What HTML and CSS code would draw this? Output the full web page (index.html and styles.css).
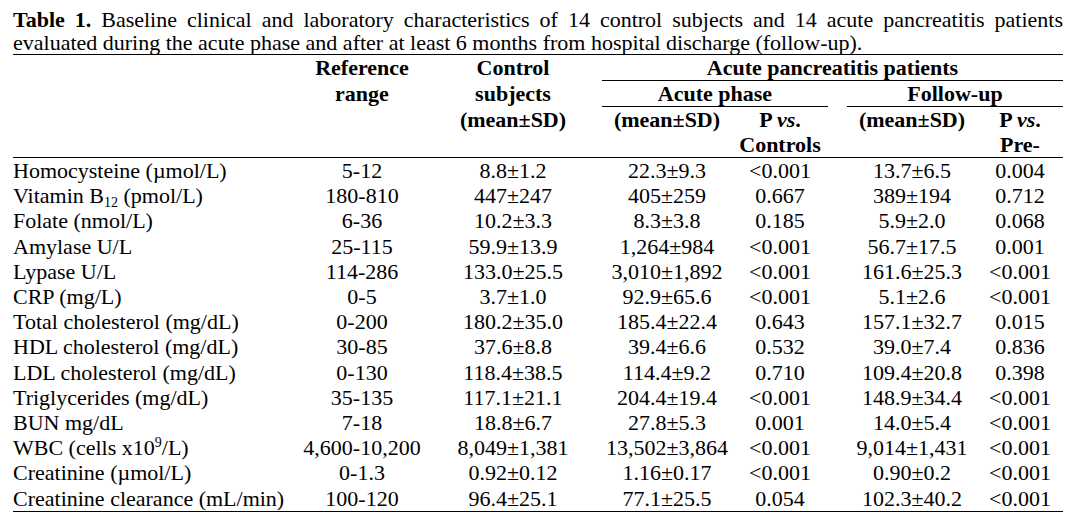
FILE: index.html
```html
<!DOCTYPE html>
<html lang="en">
<head>
<meta charset="utf-8">
<title>Table 1</title>
<link rel="stylesheet" href="styles.css">
</head>
<body>
<div class="page">
  <p class="caption"><b>Table 1.</b> Baseline clinical and laboratory characteristics of 14 control subjects and 14 acute pancreatitis patients evaluated during the acute phase and after at least 6 months from hospital discharge (follow-up).</p>
  <table class="data">
    <colgroup>
      <col class="c-name">
      <col class="c-ref">
      <col class="c-ctrl">
      <col class="c-am">
      <col class="c-ap">
      <col class="c-gap">
      <col class="c-fm">
      <col class="c-fp">
    </colgroup>
    <thead>
      <tr class="h1">
        <th></th>
        <th>Reference</th>
        <th>Control</th>
        <th colspan="6" class="rule">Acute pancreatitis patients</th>
      </tr>
      <tr class="h2">
        <th></th>
        <th>range</th>
        <th>subjects</th>
        <th colspan="2" class="rule">Acute phase</th>
        <th></th>
        <th colspan="2" class="rule">Follow-up</th>
      </tr>
      <tr class="h3">
        <th></th>
        <th></th>
        <th>(mean±SD)</th>
        <th>(mean±SD)</th>
        <th>P <i>vs</i>.</th>
        <th></th>
        <th>(mean±SD)</th>
        <th>P <i>vs</i>.</th>
      </tr>
      <tr class="h4">
        <th></th>
        <th></th>
        <th></th>
        <th></th>
        <th>Controls</th>
        <th></th>
        <th></th>
        <th>Pre-</th>
      </tr>
    </thead>
    <tbody>
      <tr><td>Homocysteine (µmol/L)</td><td>5-12</td><td>8.8±1.2</td><td>22.3±9.3</td><td>&lt;0.001</td><td></td><td>13.7±6.5</td><td>0.004</td></tr>
      <tr><td>Vitamin B<sub>12</sub> (pmol/L)</td><td>180-810</td><td>447±247</td><td>405±259</td><td>0.667</td><td></td><td>389±194</td><td>0.712</td></tr>
      <tr><td>Folate (nmol/L)</td><td>6-36</td><td>10.2±3.3</td><td>8.3±3.8</td><td>0.185</td><td></td><td>5.9±2.0</td><td>0.068</td></tr>
      <tr><td>Amylase U/L</td><td>25-115</td><td>59.9±13.9</td><td>1,264±984</td><td>&lt;0.001</td><td></td><td>56.7±17.5</td><td>0.001</td></tr>
      <tr><td>Lypase U/L</td><td>114-286</td><td>133.0±25.5</td><td>3,010±1,892</td><td>&lt;0.001</td><td></td><td>161.6±25.3</td><td>&lt;0.001</td></tr>
      <tr><td>CRP (mg/L)</td><td>0-5</td><td>3.7±1.0</td><td>92.9±65.6</td><td>&lt;0.001</td><td></td><td>5.1±2.6</td><td>&lt;0.001</td></tr>
      <tr><td>Total cholesterol (mg/dL)</td><td>0-200</td><td>180.2±35.0</td><td>185.4±22.4</td><td>0.643</td><td></td><td>157.1±32.7</td><td>0.015</td></tr>
      <tr><td>HDL cholesterol (mg/dL)</td><td>30-85</td><td>37.6±8.8</td><td>39.4±6.6</td><td>0.532</td><td></td><td>39.0±7.4</td><td>0.836</td></tr>
      <tr><td>LDL cholesterol (mg/dL)</td><td>0-130</td><td>118.4±38.5</td><td>114.4±9.2</td><td>0.710</td><td></td><td>109.4±20.8</td><td>0.398</td></tr>
      <tr><td>Triglycerides (mg/dL)</td><td>35-135</td><td>117.1±21.1</td><td>204.4±19.4</td><td>&lt;0.001</td><td></td><td>148.9±34.4</td><td>&lt;0.001</td></tr>
      <tr><td>BUN mg/dL</td><td>7-18</td><td>18.8±6.7</td><td>27.8±5.3</td><td>0.001</td><td></td><td>14.0±5.4</td><td>&lt;0.001</td></tr>
      <tr><td>WBC (cells x10<sup>9</sup>/L)</td><td>4,600-10,200</td><td>8,049±1,381</td><td>13,502±3,864</td><td>&lt;0.001</td><td></td><td>9,014±1,431</td><td>&lt;0.001</td></tr>
      <tr><td>Creatinine (µmol/L)</td><td>0-1.3</td><td>0.92±0.12</td><td>1.16±0.17</td><td>&lt;0.001</td><td></td><td>0.90±0.2</td><td>&lt;0.001</td></tr>
      <tr><td>Creatinine clearance (mL/min)</td><td>100-120</td><td>96.4±25.1</td><td>77.1±25.5</td><td>0.054</td><td></td><td>102.3±40.2</td><td>&lt;0.001</td></tr>
    </tbody>
  </table>
</div>
</body>
</html>
```

FILE: styles.css
```css
html, body {
  margin: 0;
  padding: 0;
  background: #fff;
}

.page {
  width: 1050px;
  padding: 8px 13px 0 13px;
  font-family: "Liberation Serif", "Times New Roman", serif;
  color: #000;
  font-size: 22px;
}

.caption {
  margin: 0;
  line-height: 23px;
  text-align: justify;
}

.data {
  width: 1050px;
  table-layout: fixed;
  border-collapse: collapse;
  border-top: 1px solid #000;
  border-bottom: 1px solid #000;
}

.c-name { width: 287px; }
.c-ref { width: 124px; }
.c-ctrl { width: 178px; }
.c-am { width: 130px; }
.c-ap { width: 96px; }
.c-gap { width: 19px; }
.c-fm { width: 130px; }
.c-fp { width: 86px; }

.data th,
.data td {
  padding: 0;
  text-align: center;
  white-space: nowrap;
}

.data th {
  font-weight: bold;
  line-height: 25px;
  height: 25px;
}

.data th.rule {
  border-bottom: 1px solid #000;
}

.data .h4 th {
  border-bottom: 1px solid #000;
}

.data td {
  font-weight: normal;
  line-height: 25.2px;
  height: 25.2px;
}

.data td:first-child {
  text-align: left;
}

.data sub,
.data sup {
  font-size: 14px;
  line-height: 0;
}

.data sub {
  vertical-align: -4px;
}

.data sup {
  vertical-align: 8px;
}
```
